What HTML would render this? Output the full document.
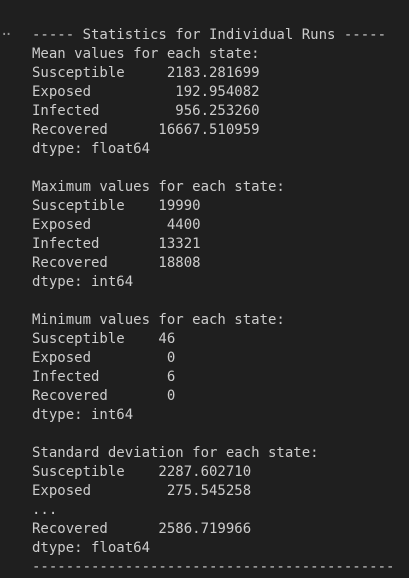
<!DOCTYPE html>
<html><head><style>
html,body{margin:0;padding:0;background:#1f1f1f;width:409px;height:578px;overflow:hidden}
pre{position:absolute;left:32px;top:26px;margin:0;font-family:"DejaVu Sans Mono","Liberation Mono",monospace;font-size:14px;line-height:19px;color:#cccccc}
.dots{position:absolute;left:0;top:26px;font-family:"DejaVu Sans Mono",monospace;font-size:14px;line-height:19px;color:#999;letter-spacing:-4px}
</style></head><body>
<div class="dots">··</div>
<pre>----- Statistics for Individual Runs -----
Mean values for each state:
Susceptible     2183.281699
Exposed          192.954082
Infected         956.253260
Recovered      16667.510959
dtype: float64

Maximum values for each state:
Susceptible    19990
Exposed         4400
Infected       13321
Recovered      18808
dtype: int64

Minimum values for each state:
Susceptible    46
Exposed         0
Infected        6
Recovered       0
dtype: int64

Standard deviation for each state:
Susceptible    2287.602710
Exposed         275.545258
...
Recovered      2586.719966
dtype: float64
-------------------------------------------</pre>
</body></html>
